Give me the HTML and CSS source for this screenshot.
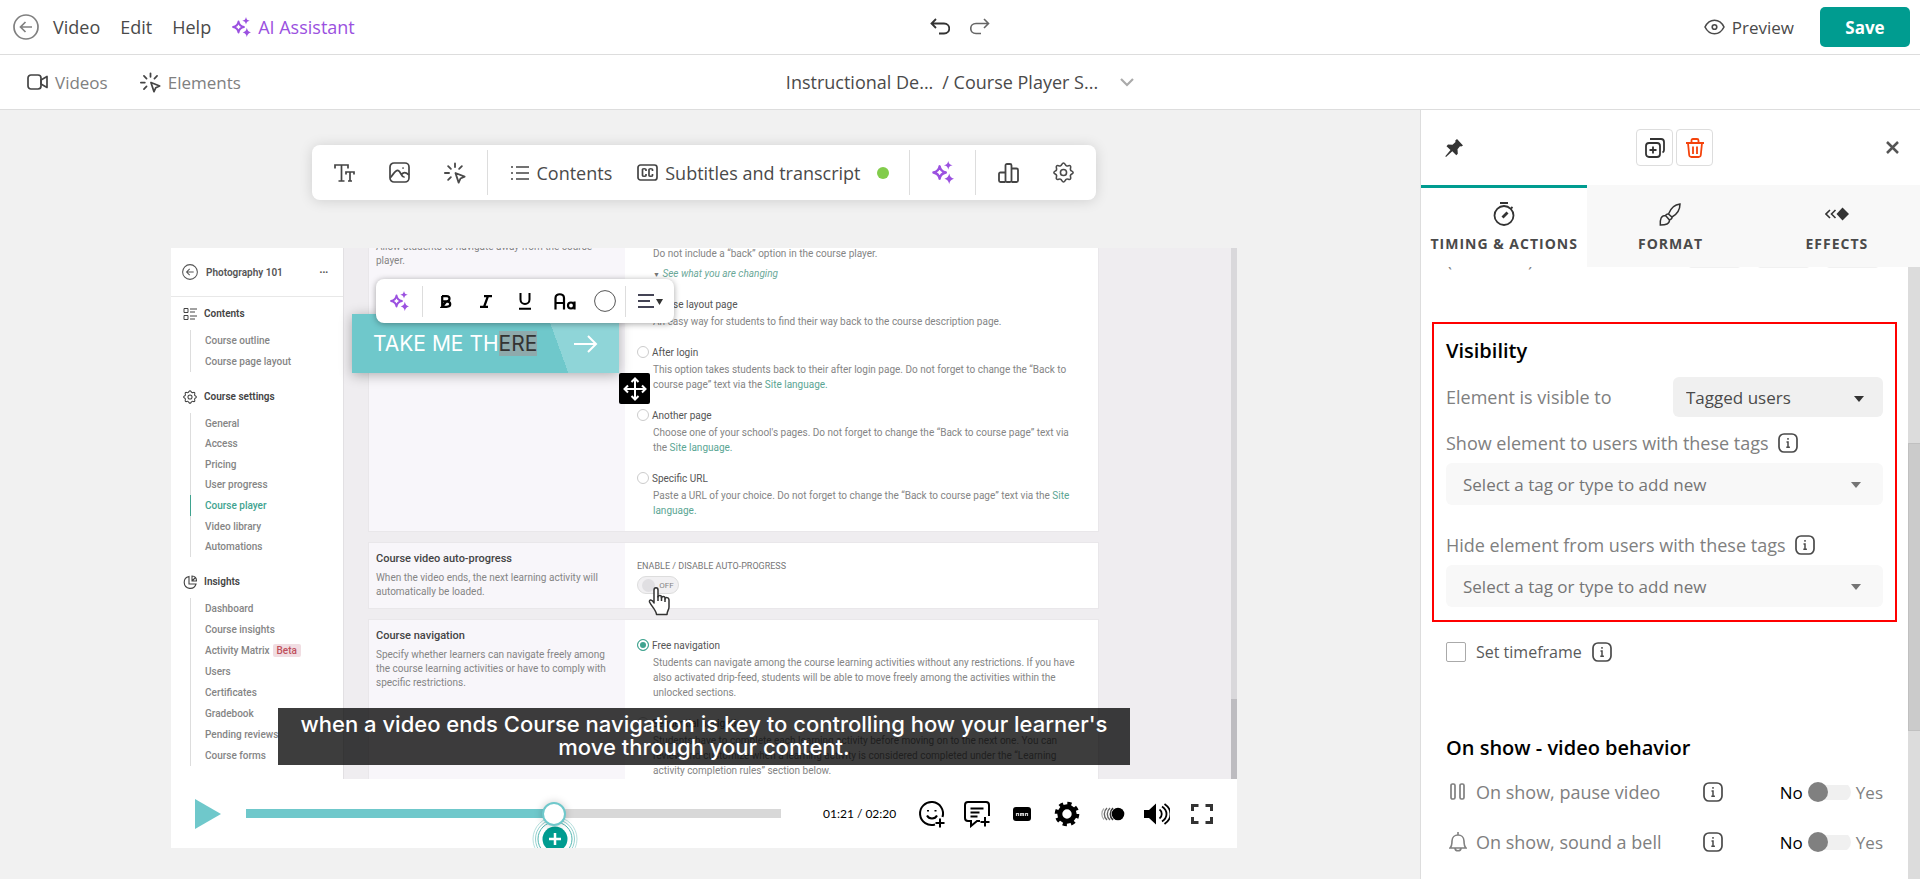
FILE: index.html
```html
<!DOCTYPE html>
<html lang="en">
  <head>
    <meta charset="UTF-8" />
    <meta name="viewport" content="width=device-width, initial-scale=1.0" />
    <title>Video Editor</title>
    <link rel="stylesheet" href="styles.css">
  </head>
  <body>
    <!-- shared icons -->
    <svg class="sprite" aria-hidden="true">
      <symbol id="i-sparkle" viewBox="0 0 24 24">
        <path fill="none" stroke="currentColor" stroke-width="2.400" stroke-linejoin="round" d="M9 5.500c.7 4 2.500 5.800 6.500 6.500-4 .7-5.800 2.500-6.500 6.500-.7-4-2.500-5.800-6.500-6.500 4-.7 5.800-2.500 6.500-6.500z" />
        <path fill="currentColor" d="M18 0c.6 3 1.700 4 4.500 4.500-2.800.5-3.900 1.500-4.500 4.500-.6-3-1.700-4-4.500-4.500C16.300 4 17.400 3 18 0zM19 13c.7 3.400 2 4.800 5 5.500-3 .7-4.300 2.100-5 5.500-.7-3.400-2-4.800-5-5.500 3-.7 4.300-2.100 5-5.500z" />
      </symbol>
      <symbol id="i-click" viewBox="0 0 24 24">
        <g fill="none" stroke="currentColor" stroke-width="2" stroke-linecap="round" stroke-linejoin="round">
          <path d="M12.500 12l10 4-4.500 2-2 4.500z" />
          <path d="M12 1.500v4M4.500 4.500l3 3M1 12h4.500M4.500 19.500l3-3M19.500 4.500l-3 3" />
        </g>
      </symbol>
      <symbol id="i-info" viewBox="0 0 20 20">
        <rect x="1" y="1" width="18" height="18" rx="5" fill="none" stroke="currentColor" stroke-width="1.700" />
        <path d="M10 5v1.800M8.500 9H10v5M8.300 14.300h3.600" fill="none" stroke="currentColor" stroke-width="1.500" />
      </symbol>
      <symbol id="i-gear" viewBox="0 0 24 24">
        <g fill="none" stroke="currentColor" stroke-width="1.800" stroke-linejoin="round">
          <path d="M12 1.200c1.800 0 1.800 2.600 3.400 3.200 1.600.7 3.300-1.200 4.500.1s-.6 3 .1 4.500c.6 1.600 3 1.300 3 3s-2.400 1.500-3 3c-.7 1.600 1.100 3.200-.1 4.500s-3-.6-4.500.1c-1.600.6-1.600 3.200-3.400 3.200s-1.800-2.600-3.400-3.200c-1.500-.7-3.300 1.200-4.500-.1s.6-3-.1-4.500c-.6-1.500-3-1.300-3-3s2.400-1.400 3-3c.7-1.500-1.100-3.200.1-4.500s3 .6 4.500-.1c1.600-.6 1.600-3.200 3.400-3.200z" />
          <circle cx="12" cy="12" r="3.500" />
        </g>
      </symbol>
      <symbol id="i-back" viewBox="0 0 26 26">
        <g fill="none" stroke="currentColor" stroke-width="1.700">
          <circle cx="13" cy="13" r="12" />
          <path d="M19 13H8M12.500 8L7.500 13l5 5" />
        </g>
      </symbol>
    </svg>

    <header class="topbar">
      <nav class="menu">
        <a href="#" class="back" aria-label="Back"><svg width="26" height="26"><use href="#i-back" /></svg></a>
        <a href="#">Video</a>
        <a href="#">Edit</a>
        <a href="#">Help</a>
        <a href="#" class="ai"><svg width="20" height="20"><use href="#i-sparkle" /></svg>AI Assistant</a>
      </nav>
      <div class="history">
        <button aria-label="Undo">
          <svg width="20" height="18" viewBox="0 0 20 18" fill="none" stroke="#333" stroke-width="1.800"><path d="M6 1L1.500 5.500 6 10M1.500 5.500H14c7 0 7 10 0 10H9" /></svg>
        </button>
        <button aria-label="Redo">
          <svg width="20" height="18" viewBox="0 0 20 18" fill="none" stroke="#666" stroke-width="1.600"><path d="M14 1l4.500 4.500L14 10M18.500 5.500H6c-7 0-7 10 0 10h5" /></svg>
        </button>
      </div>
      <div class="actions">
        <a href="#" class="preview">
          <svg width="21" height="16" viewBox="0 0 21 16" fill="none" stroke="currentColor" stroke-width="1.600"><path d="M1 8c4.500-9 14.500-9 19 0-4.500 9-14.500 9-19 0z" /><circle cx="10.500" cy="8" r="2.300" /></svg>Preview</a>
        <button class="save">Save</button>
      </div>
    </header>

    <div class="subbar">
      <nav class="sources">
        <a href="#"><svg width="21" height="16" viewBox="0 0 21 16" fill="none" stroke="#444" stroke-width="1.700" stroke-linejoin="round"><rect x="1" y="1" width="13" height="14" rx="3" /><path d="M14 6l6-3.500v11L14 10z" /></svg>Videos</a>
        <a href="#"><svg class="dark" width="21" height="21"><use href="#i-click" /></svg>Elements</a>
      </nav>
      <div class="crumbs">
        <span>Instructional De...</span><span>/ Course Player S...</span>
        <button aria-label="Choose activity"><svg width="14" height="9" viewBox="0 0 14 9" fill="none" stroke="#aaa" stroke-width="2.200"><path d="M1 1l6 6 6-6" /></svg></button>
      </div>
    </div>

    <div class="workspace">
      <main class="stage">
        <div class="toolbar">
          <div class="group">
            <button aria-label="Text"><svg width="21" height="18" viewBox="0 0 21 18" fill="none" stroke="#444" stroke-width="1.700"><path d="M1 4.500V1h13v3.500M7.500 1v16M4.500 17h6M12 10.500V8h8v2.500M16 8v9M14 17h4" /></svg></button>
            <button aria-label="Image"><svg width="21" height="21" viewBox="0 0 21 21" fill="none" stroke="#444" stroke-width="1.700" stroke-linecap="round"><rect x="1" y="1" width="19" height="19" rx="4" /><path d="M2 15c5-7 7-9 10-3 1 2 2 3 3 3M12.500 12.500c2-2.500 4-2.500 7 0M14 6h.1" /></svg></button>
            <button aria-label="Interactions"><svg width="22" height="22"><use href="#i-click" /></svg></button>
          </div>
          <div class="group wide">
            <button class="labeled"><svg width="18" height="16" viewBox="0 0 18 16" stroke="#444" stroke-width="1.600"><path d="M0 2h2M5 2h13M0 8h2M5 8h13M0 14h2M5 14h13" /></svg>Contents</button>
            <button class="labeled"><svg width="21" height="17" viewBox="0 0 21 17" fill="none" stroke="#444" stroke-width="1.700"><rect x="1" y="1" width="19" height="15" rx="2.500" /><path d="M9 7V5.500c0-1-3.500-1-3.500 0v6c0 1 3.500 1 3.500 0V10M15.500 7V5.500c0-1-3.500-1-3.500 0v6c0 1 3.500 1 3.500 0V10" /></svg>Subtitles and transcript</button>
            <span class="dot"></span>
          </div>
          <div class="group">
            <button class="purple" aria-label="AI"><svg width="23" height="23"><use href="#i-sparkle" /></svg></button>
          </div>
          <div class="group">
            <button aria-label="Statistics"><svg width="21" height="20" viewBox="0 0 21 20" fill="none" stroke="#444" stroke-width="1.800"><rect x="7.500" y="1" width="6" height="18" rx="1.500" /><path d="M7.500 9.500h-5C1.500 9.500 1 10 1 11v6.500c0 1 .5 1.500 1.500 1.500h5M13.500 5.500h5c1 0 1.500.5 1.500 1.500v10.500c0 1-.5 1.500-1.500 1.500h-5" /></svg></button>
            <button aria-label="Settings"><svg width="21" height="21"><use href="#i-gear" /></svg></button>
          </div>
        </div>

        <div class="player">
          <div class="frame">
            <div class="course-nav">
              <div class="course-head"><svg width="16" height="16"><use href="#i-back" /></svg><b>Photography 101</b><span>•••</span></div>
              <h4><svg width="14" height="14" viewBox="0 0 14 14" fill="none" stroke="currentColor"><path d="M1 1.500h4v4H1zM1 8.500h4v4H1zM7 2h7M7 5h5M7 9h7M7 12h5" /></svg>Contents</h4>
              <ul class="two">
                <li>Course outline</li>
                <li>Course page layout</li>
              </ul>
              <h4><svg width="14" height="14"><use href="#i-gear" /></svg>Course settings</h4>
              <ul class="seven">
                <li>General</li>
                <li>Access</li>
                <li>Pricing</li>
                <li>User progress</li>
                <li class="current">Course player</li>
                <li>Video library</li>
                <li>Automations</li>
              </ul>
              <h4><svg width="14" height="14" viewBox="0 0 14 14" fill="none" stroke="currentColor" stroke-width="1.100"><path d="M6 1.500a6 6 0 1 0 7 7.500H6z" /><path d="M9 1v5h4.500C13.500 3 12 1 9 1zM9 6l3-3" /></svg>Insights</h4>
              <ul class="eight">
                <li>Dashboard</li>
                <li>Course insights</li>
                <li>Activity Matrix <span class="beta">Beta</span></li>
                <li>Users</li>
                <li>Certificates</li>
                <li>Gradebook</li>
                <li>Pending reviews</li>
                <li>Course forms</li>
              </ul>
            </div>

            <div class="course-main">
              <section class="card first">
                <div class="about"><p>Allow students to navigate away from the course player.</p></div>
                <div class="options">
                  <p>Do not include a “back” option in the course player.</p>
                  <p class="hint"><span>▼</span> See what you are changing</p>
                  <label><input type="radio" name="back">Course layout page</label>
                  <p>An easy way for students to find their way back to the course description page.</p>
                  <label><input type="radio" name="back">After login</label>
                  <p>This option takes students back to their after login page. Do not forget to change the “Back to course page” text via the <a href="#">Site language.</a></p>
                  <label><input type="radio" name="back">Another page</label>
                  <p>Choose one of your school's pages. Do not forget to change the “Back to course page” text via the <a href="#">Site language.</a></p>
                  <label><input type="radio" name="back">Specific URL</label>
                  <p>Paste a URL of your choice. Do not forget to change the “Back to course page” text via the <a href="#">Site language.</a></p>
                </div>
              </section>
              <section class="card">
                <div class="about"><h5>Course video auto-progress</h5><p>When the video ends, the next learning activity will automatically be loaded.</p></div>
                <div class="options auto">
                  <h6>ENABLE / DISABLE AUTO-PROGRESS</h6>
                  <button class="off">OFF</button>
                </div>
              </section>
              <section class="card">
                <div class="about"><h5>Course navigation</h5><p>Specify whether learners can navigate freely among the course learning activities or have to comply with specific restrictions.</p></div>
                <div class="options">
                  <label><input type="radio" name="nav" checked>Free navigation</label>
                  <p>Students can navigate among the course learning activities without any restrictions. If you have also activated drip-feed, students will be able to move freely among the activities within the unlocked sections.</p>
                  <label><input type="radio" name="nav">Sequential navigation</label>
                  <p>Students have to complete each learning activity before moving on to the next one. You can review and customize when a learning activity is considered completed under the “Learning activity completion rules” section below.</p>
                </div>
              </section>
            </div>
            <div class="frame-scroll"><div></div></div>

            <!-- things lying over the video -->
            <svg class="hand" width="22" height="29" viewBox="0 0 22 29" fill="#fff" stroke="#333" stroke-width="1.500" stroke-linejoin="round"><path d="M6 16V3c0-3 4-3 4 0v7c0-2 3.500-2 3.500 0v1c0-2 3.500-2 3.500 0v1c0-2 4-2 4 1v7c0 3-2 4-2 7.500H8.500C8 23 4 20 1.500 15 1 12.500 4 12 6 16z" /><path d="M10 9v5M13.500 10v4M17 11.500V15" /></svg>

            <div class="cta">
              <span>TAKE ME TH<mark>ERE</mark></span>
              <svg width="24" height="18" viewBox="0 0 24 18" fill="none" stroke="#fff" stroke-width="2"><path d="M0 9h22M14 1l8 8-8 8" /></svg>
            </div>
            <div class="move">
              <svg width="24" height="24" viewBox="0 0 24 24" fill="none" stroke="#fff" stroke-width="2"><path d="M12 2v20M2 12h20M8.500 5L12 1.500 15.500 5M8.500 19l3.500 3.500 3.500-3.500M5 8.500L1.500 12 5 15.500M19 8.500l3.500 3.500-3.500 3.500" /></svg>
            </div>
            <div class="text-tools">
              <button class="purple ai-tool" aria-label="AI"><svg width="20" height="20"><use href="#i-sparkle" /></svg></button>
              <button aria-label="Bold"><svg width="12" height="13" viewBox="0 0 12 13" fill="none" stroke="#000" stroke-width="2.200"><path d="M2 1.200h4.500c4 0 4 5.100 0 5.100H2M6.500 6.300c5 0 5 5.500 0 5.500H2zM2.200 1v11" /></svg></button>
              <button aria-label="Italic"><svg width="14" height="13" viewBox="0 0 14 13" fill="none" stroke="#000" stroke-width="2.200"><path d="M5 1.100h8M1 11.900h8M9 1L5 12" /></svg></button>
              <button aria-label="Underline"><svg width="14" height="17" viewBox="0 0 14 17" fill="none" stroke="#000" stroke-width="2"><path d="M2.500 0v6.500c0 6 9 6 9 0V0M1 15.800h12" /></svg></button>
              <button aria-label="Font"><svg width="22" height="17" viewBox="0 0 22 17" fill="none" stroke="#000" stroke-width="2.200"><path d="M1.500 16.500V5c0-5 8.500-5 8.500 0v11.500M1.500 10H10" /><circle cx="17" cy="12.500" r="3" /><path d="M20.500 8.500v8" /></svg></button>
              <button aria-label="Color"><svg width="22" height="22" viewBox="0 0 22 22" fill="none" stroke="#555"><circle cx="11" cy="11" r="10.400" /></svg></button>
              <button class="align" aria-label="Align"><svg width="25" height="14" viewBox="0 0 25 14"><path d="M0 1h16M0 7h12M0 13h16" stroke="#445" stroke-width="1.800" /><path d="M18 5h7l-3.500 6z" fill="#333" /></svg></button>
            </div>
            <p class="caption">when a video ends Course navigation is key to controlling how your learner's move through your content.</p>
          </div>

          <div class="controls">
            <button aria-label="Play"><svg width="26" height="30" viewBox="0 0 26 30"><path d="M0 0l26 15L0 30z" fill="#6fc8cb" /></svg></button>
            <div class="seek">
              <input type="range" min="0" max="140" value="81" aria-label="Seek">
              <svg class="marker" width="46" height="46" viewBox="0 0 46 46" fill="none"><circle cx="23" cy="23" r="22" stroke="#b5dfdd" /><circle cx="23" cy="23" r="19.500" stroke="#93d0cd" /><circle cx="23" cy="23" r="17" fill="#fff" stroke="#4fb5b0" /><circle cx="23" cy="23" r="12.500" fill="#009c90" /><path d="M17 23h12M23 17v12" stroke="#fff" stroke-width="2.500" /></svg>
            </div>
            <span class="time">01:21 / 02:20</span>
            <div class="player-buttons">
              <button aria-label="Reactions"><svg width="28" height="28" viewBox="0 0 28 28" fill="none" stroke="#000" stroke-width="2"><path d="M24.500 17A11.500 11.500 0 1 0 17 24.500" /><path d="M9 15.500c2 4 8 4 10 0M10 10v1.500M17.500 10v1.500M22 18.500v9M17.500 23h9" /></svg></button>
              <button aria-label="Comment"><svg width="28" height="28" viewBox="0 0 28 28" fill="none" stroke="#000" stroke-width="2"><path d="M26 16V5c0-2-1-3-3-3H5C3 2 2 3 2 5v13c0 2 1 3 3 3h3v5l6-5h3M22 17v9.500M17.500 22h9M7.500 8.500h13M7.500 12.500h9M7.500 16.500h7" /></svg></button>
              <button aria-label="Subtitles"><svg width="18" height="14" viewBox="0 0 18 14"><rect width="18" height="14" rx="3" /><path d="M3.500 9V6.500h2V9M7.500 9V6.500h3V9M9 6.500V9M12.500 9V6.500h2V9" fill="none" stroke="#ccc" stroke-width="1.200" /></svg></button>
              <button aria-label="Settings"><svg width="26" height="26" viewBox="0 0 26 26"><circle cx="13" cy="13" r="7.200" fill="none" stroke="#000" stroke-width="5" /><circle cx="13" cy="13" r="10.300" fill="none" stroke="#000" stroke-width="4" stroke-dasharray="4.090 4" /></svg></button>
              <button aria-label="Speed"><svg width="26" height="14" viewBox="0 0 26 14"><circle cx="19" cy="7" r="6.300" /><path d="M14 1a8 8 0 0 0 0 12" fill="none" stroke="#333" stroke-width="1.600" /><path d="M11 1a8 8 0 0 0 0 12M8 1a8 8 0 0 0 0 12" fill="none" stroke="#666" stroke-width="1.400" /><path d="M5 1.500a8 8 0 0 0 0 11" fill="none" stroke="#aaa" stroke-width="1.200" /></svg></button>
              <button aria-label="Volume"><svg width="26" height="22" viewBox="0 0 26 22"><path d="M0 7h5l7-6.500v21L5 15H0z" /><path d="M15.500 6.500c3 2 3 7 0 9M18 3.500c6 4 6 11 0 15M20.500 1c8 5.500 8 14.500 0 20" fill="none" stroke="#000" stroke-width="1.800" /></svg></button>
              <button aria-label="Fullscreen"><svg width="22" height="20" viewBox="0 0 22 20" fill="none" stroke="#333" stroke-width="3"><path d="M1.500 7V1.500h6M14.500 1.500h6V7M20.500 13v5.500h-6M7.500 18.500h-6V13" /></svg></button>
            </div>
          </div>
        </div>
      </main>

      <aside class="panel">
        <div class="panel-head">
          <button aria-label="Pin"><svg width="18" height="18" viewBox="0 0 18 18" fill="#333"><path d="M12 0l6 6.500-1.800 1-1.200-.3-2.500 3 .3 4.500-1.500 1.500-4-4L1 18l-.7-.7L5.500 11 1.500 7.200 3 5.500l4.500.3L10.500 3l-.2-1.500z" /></svg></button>
          <div class="pair">
            <button class="boxed" aria-label="Duplicate"><svg width="20" height="20" viewBox="0 0 20 20" fill="none" stroke="#333" stroke-width="1.800"><rect x="1" y="5" width="14" height="14" rx="3" /><path d="M5 1h11c2 0 3 1 3 3v8c0 1.500-.5 2-1.500 2.500M8 8.500v7M4.500 12h7" /></svg></button>
            <button class="boxed" aria-label="Delete"><svg width="18" height="20" viewBox="0 0 18 20" fill="none" stroke="#f4430c" stroke-width="1.800"><path d="M0 5h18M2 5l1.200 12c.2 1.500 1 2 2.200 2h7.200c1.200 0 2-.5 2.200-2L16 5M5.500 5V2.500c0-1 .5-1.500 1.500-1.500h4c1 0 1.500.5 1.500 1.500V5M7 8.500V16M11 8.500V16" /></svg></button>
          </div>
          <button aria-label="Close"><svg width="13" height="13" viewBox="0 0 13 13" stroke="#555" stroke-width="2.500"><path d="M1 1l11 11M12 1L1 12" /></svg></button>
        </div>
        <div class="tabs">
          <button class="active"><svg width="22" height="24" viewBox="0 0 22 24" fill="none" stroke="#333" stroke-width="1.800"><circle cx="11" cy="13.500" r="9.500" /><path d="M7 1h8M18 6.500l1.500-1.500" /><path d="M9.500 15.500l5-5" stroke-width="2.800" /></svg>TIMING &amp; ACTIONS</button>
          <button><svg width="22" height="24" viewBox="0 0 22 24" fill="none" stroke="#333" stroke-width="1.500"><path d="M21 2c-5 .5-9 3.500-11.500 10l3.500 3C18.500 12 21 8 21 2zM9.500 12c-1.500-.5-2 0-3 1.500l4 4.500c1.500-.8 3-1.500 2.500-3M6.500 13.500C2 13.500 1 17 1.300 23 7 23 10.500 22 10.500 18" /></svg>FORMAT</button>
          <button><svg width="24" height="24" viewBox="0 0 24 24" fill="none" stroke="#333" stroke-width="1.600"><path d="M5 8l-4 4 4 4M10.500 8l-4 4 4 4" /><path d="M17.500 5.500l6.500 6.500-6.500 6.500L11.500 12z" fill="#333" stroke="none" /></svg>EFFECTS</button>
        </div>

        <div class="panel-scroll">
          <form class="panel-body">
            <div class="time-row">
              <span>(mm:ss.00)</span>
              <input type="text" aria-label="Minutes"><input type="text" aria-label="Seconds"><input type="text" aria-label="Hundredths">
            </div>

            <section class="visibility">
              <h3>Visibility</h3>
              <div class="row">
                <label for="visible">Element is visible to</label>
                <div class="select dark-select"><select id="visible"><option>Tagged users</option></select></div>
              </div>
              <div class="field">
                <label for="showTags">Show element to users with these tags <svg width="20" height="20"><use href="#i-info" /></svg></label>
                <div class="select"><select id="showTags"><option>Select a tag or type to add new</option></select></div>
              </div>
              <div class="field">
                <label for="hideTags">Hide element from users with these tags <svg width="20" height="20"><use href="#i-info" /></svg></label>
                <div class="select"><select id="hideTags"><option>Select a tag or type to add new</option></select></div>
              </div>
            </section>

            <div class="timeframe">
              <input type="checkbox" id="timeframe"><label for="timeframe">Set timeframe</label><svg width="20" height="20"><use href="#i-info" /></svg>
            </div>

            <section class="behavior">
              <h3>On show - video behavior</h3>
              <div class="toggle-row">
                <svg class="lead" width="18" height="20" viewBox="0 0 18 20" fill="none" stroke="#808080" stroke-width="1.700"><rect x="2" y="2" width="4" height="15" rx="1.500" /><rect x="11" y="2" width="4" height="15" rx="1.500" /></svg>
                <label for="pause">On show, pause video</label>
                <svg width="20" height="20"><use href="#i-info" /></svg>
                <div class="switch"><b>No</b><input type="checkbox" id="pause"><span>Yes</span></div>
              </div>
              <div class="toggle-row">
                <svg class="lead" width="18" height="20" viewBox="0 0 18 20" fill="none" stroke="#808080" stroke-width="1.600"><path d="M1 16c2-2 2-4 2-7 0-8 12-8 12 0 0 3 0 5 2 7zM6 16.500c.5 3 5.500 3 6 0M9 0v2.500" /></svg>
                <label for="bell">On show, sound a bell</label>
                <svg width="20" height="20"><use href="#i-info" /></svg>
                <div class="switch"><b>No</b><input type="checkbox" id="bell"><span>Yes</span></div>
              </div>
            </section>
          </form>
          <div class="scrollbar"><div></div></div>
        </div>
      </aside>
    </div>
  </body>
</html>
```
FILE: styles.css
```css
* {
  box-sizing: border-box;
}
body {
  margin: 0;
  height: 100vh;
  overflow: hidden;
  display: flex;
  flex-direction: column;
  font-family: "Open Sans", "Noto Sans", sans-serif;
  font-size: 18px;
  color: #4a4a4a;
  background-color: #fff;
}
.sprite {
  display: none;
}
svg {
  flex: none;
}
h3,
h4,
h5,
h6,
p,
ul {
  margin: 0;
  padding: 0;
}
a {
  color: inherit;
  text-decoration: none;
}
button {
  background: none;
  border: none;
  padding: 0;
  margin: 0;
  font: inherit;
  color: inherit;
  cursor: pointer;
  display: flex;
  align-items: center;
  justify-content: center;
}

/* Top bars */
.topbar,
.subbar {
  flex: none;
  height: 55px;
  border-bottom: 1px solid #ddd;
  display: grid;
  grid-template-columns: 1fr auto 1fr;
  align-items: center;
}
.menu,
.actions,
.sources,
.crumbs,
.history,
.menu a,
.actions a,
.sources a {
  display: flex;
  align-items: center;
}
.menu {
  padding-left: 13px;
  gap: 20px;
}
.back {
  color: #808080;
  margin-right: -6px;
}
.ai,
.purple {
  color: #9b51e0;
}
.ai,
.sources a,
.preview {
  gap: 7px;
}
.history {
  gap: 20px;
}
.actions {
  justify-content: flex-end;
  gap: 26px;
  padding-right: 10px;
  font-weight: 500;
}
.save {
  width: 90px;
  height: 40px;
  border-radius: 5px;
  background-color: #009c90;
  color: #fff;
  font-size: 17px;
  font-weight: 700;
}
.preview {
  font-size: 17px;
}
.sources {
  padding-left: 27px;
  gap: 32px;
  color: #808080;
  font-size: 17px;
  font-weight: 500;
}
.dark {
  color: #444;
}
.crumbs {
  gap: 9px;
}
.crumbs button {
  margin-left: 13px;
}

/* Stage */
.workspace {
  flex: 1;
  min-height: 0;
  display: grid;
  grid-template-columns: 1fr 500px;
}
.stage {
  background-color: #f1f1f1;
  padding: 35px 183px 0 171px;
  display: flex;
  flex-direction: column;
  align-items: center;
}
.toolbar {
  height: 55px;
  background-color: #fff;
  border-radius: 8px;
  box-shadow: 0 1px 14px rgba(0, 0, 0, 0.14);
  display: flex;
  align-items: center;
}
.group {
  height: 45px;
  padding: 0 5px;
  display: flex;
  align-items: center;
  border-right: 1px solid #ddd;
}
.group:last-child {
  border-right: none;
}
.group button {
  width: 55px;
}
.group.wide {
  padding: 0 20px 0 23px;
}
.group .labeled {
  width: auto;
  gap: 7px;
  margin-right: 25px;
}
.wide .labeled:nth-child(2) {
  margin-right: 16px;
}
.dot {
  width: 12px;
  height: 12px;
  border-radius: 50%;
  background-color: #82cc4b;
}

/* Player */
.player {
  width: 100%;
  margin-top: 48px;
  background-color: #fff;
  overflow: hidden;
}
.frame {
  position: relative;
  height: 531px;
  overflow: hidden;
  display: flex;
  font-family: Roboto, "Open Sans", sans-serif;
  font-size: 10px;
  color: #858585;
  background-color: #efedf0;
}
.course-nav {
  width: 173px;
  flex: none;
  background-color: #fff;
  border-right: 1px solid #e2e0e3;
  font-weight: 500;
}
.course-head {
  height: 49px;
  padding: 0 15px 0 11px;
  border-bottom: 1px solid #e8e8e8;
  display: flex;
  align-items: center;
  gap: 8px;
  color: #555;
}
.course-head b {
  flex: 1;
  font-weight: 600;
}
.course-head span {
  font-size: 8px;
}
.course-nav h4 {
  height: 33px;
  padding-left: 12px;
  display: flex;
  align-items: center;
  gap: 7px;
  font-size: 10px;
  font-weight: 600;
  color: #444;
}
.course-nav ul {
  list-style: none;
  margin: 0 0 8px 19px;
  border-left: 1px solid #ddd;
  display: grid;
  grid-auto-rows: 1fr;
}
.course-nav li {
  padding-left: 14px;
  display: flex;
  align-items: center;
  gap: 3px;
}
.two {
  height: 42px;
}
.seven {
  height: 144px;
}
.eight {
  height: 168px;
}
.course-nav .current {
  color: #3fa38f;
  border-left: 1px solid #3fa38f;
  margin-left: -1px;
}
.beta {
  background-color: #f1dde2;
  color: #c0505c;
  border-radius: 2px;
  padding: 1px 4px;
}
.course-main {
  flex: 1;
  padding: 0 132px 0 24px;
}
.card {
  display: grid;
  grid-template-columns: 256px 1fr;
  background-color: #fff;
  border: 1px solid #e9e7ea;
  margin-bottom: 10px;
}
.card.first {
  margin-top: -20px;
}
.about {
  background-color: #f8f6fa;
  padding: 9px 7px;
  line-height: 14px;
}
.first .about {
  padding-top: 11px;
}
.about h5 {
  font-size: 11px;
  font-weight: 500;
  color: #444;
  margin-bottom: 5px;
}
.about p {
  padding-right: 4px;
}
.options {
  padding: 15px 16px 0 12px;
  line-height: 15px;
}
.first .options {
  padding-top: 17px;
}
.options label {
  height: 20px;
  display: flex;
  align-items: center;
  gap: 3px;
  color: #555;
}
.options p {
  padding-left: 16px;
  margin-bottom: 13px;
}
.options p:first-child {
  margin-bottom: 5px;
}
.options .hint {
  color: #6aa898;
  font-style: italic;
  margin-bottom: 11px;
}
.hint span {
  font-size: 7px;
  font-style: normal;
  color: #777;
}
.options a {
  color: #5aa593;
}
.options input {
  appearance: none;
  width: 12px;
  height: 12px;
  margin: 0;
  border: 1px solid #ccc;
  border-radius: 50%;
  background-color: #fff;
}
.options input:checked {
  border-color: #3fa38f;
  background-color: #3fa38f;
  box-shadow: inset 0 0 0 2px #fff;
}
.options.auto {
  padding-bottom: 12px;
}
.auto h6 {
  font-size: 9px;
  line-height: 16px;
  font-weight: 400;
  color: #777;
  margin-bottom: 2px;
}
.off {
  width: 42px;
  height: 18px;
  border: 1px solid #ddd;
  border-radius: 9px;
  background-color: #f1f0f2;
  font-size: 8px;
  gap: 4px;
}
.off::before {
  content: "";
  width: 13px;
  height: 13px;
  border-radius: 50%;
  background-color: #e0dfe2;
}
.frame-scroll {
  width: 6px;
  flex: none;
  background-color: #d9d8db;
  display: flex;
  align-items: flex-end;
}
.frame-scroll div {
  width: 100%;
  height: 15%;
  background-color: #bdbcc0;
}

/* Overlays, placed on the video canvas */
.hand {
  position: absolute;
  left: 477px;
  top: 339px;
}
.cta {
  position: absolute;
  left: 181px;
  top: 66px;
  width: 267px;
  height: 59px;
  padding: 0 21px;
  display: flex;
  align-items: center;
  justify-content: space-between;
  background: linear-gradient(70deg, #6fc8cb 75%, #8fd5d8 75%);
  box-shadow: 0 2px 12px rgba(0, 0, 0, 0.3);
  color: #fff;
  font-family: Inter, sans-serif;
  font-size: 21px;
}
.cta mark {
  background-color: #8eaaac;
  color: #333;
}
.move {
  position: absolute;
  left: 448px;
  top: 125px;
  width: 31px;
  height: 31px;
  border-radius: 2px;
  background-color: #000;
  display: flex;
  align-items: center;
  justify-content: center;
}
.text-tools {
  position: absolute;
  left: 205px;
  top: 31px;
  width: 298px;
  height: 44px;
  border-radius: 8px;
  background-color: #fff;
  box-shadow: 0 1px 6px rgba(0, 0, 0, 0.35);
  display: flex;
  align-items: center;
}
.text-tools button {
  width: 40px;
  height: 31px;
}
.text-tools .ai-tool {
  width: 47px;
  border-right: 1px solid #ddd;
  margin-right: 3px;
}
.text-tools .align {
  width: 49px;
  border-left: 1px solid #ddd;
}
.caption {
  position: absolute;
  left: 107px;
  right: 107px;
  bottom: 14px;
  height: 57px;
  padding: 5px 12px;
  background-color: rgba(0, 0, 0, 0.76);
  color: #fff;
  font-family: Inter, sans-serif;
  font-size: 22px;
  font-weight: 500;
  line-height: 23px;
  text-align: center;
}

/* Controls */
.controls {
  height: 69px;
  padding: 0 24px;
  display: flex;
  align-items: center;
}
.seek {
  position: relative;
  flex: 1;
  margin: 0 42px 0 25px;
  display: flex;
}
.seek input {
  appearance: none;
  position: relative;
  z-index: 1;
  width: 100%;
  height: 24px;
  margin: 0;
  background: linear-gradient(90deg, #6fc8cb 57%, #d8d8d8 57%) center / 100% 9px no-repeat;
}
.seek input::-webkit-slider-thumb {
  appearance: none;
  width: 24px;
  height: 24px;
  border-radius: 50%;
  background-color: #fff;
  border: 2px solid #6fc8cb;
  box-shadow: 0 0 8px rgba(0, 0, 0, 0.2);
}
.marker {
  position: absolute;
  left: 286px;
  top: 14px;
}
.time {
  font-family: Lato, sans-serif;
  font-size: 12px;
  color: #000;
  width: 73px;
  white-space: nowrap;
}
.player-buttons {
  display: flex;
  margin: 0 -11px 0 13px;
}
.player-buttons button {
  width: 45px;
}

/* Right panel */
.panel {
  border-left: 1px solid #ddd;
  display: flex;
  flex-direction: column;
  min-height: 0;
}
.panel-head {
  flex: none;
  height: 75px;
  padding: 0 21px 0 24px;
  display: flex;
  align-items: center;
  justify-content: space-between;
}
.pair {
  display: flex;
  gap: 3px;
}
.boxed {
  width: 37px;
  height: 37px;
  border: 1px solid #ddd;
  border-radius: 4px;
}
.tabs {
  flex: none;
  height: 82px;
  display: grid;
  grid-template-columns: repeat(3, 1fr);
}
.tabs button {
  flex-direction: column;
  gap: 8px;
  border-top: 3px solid #f8f8f8;
  background-color: #f8f8f8;
  font-size: 14px;
  font-weight: 700;
  letter-spacing: 1px;
}
.tabs .active {
  border-color: #009c90;
  background-color: #fff;
}
.panel-scroll {
  flex: 1;
  min-height: 0;
  display: flex;
}
.panel-body {
  flex: 1;
  overflow: hidden;
  padding: 0 11px;
  color: #808080;
}
.scrollbar {
  width: 12px;
  background-color: #dcdcdc;
  padding-top: 176px;
}
.scrollbar div {
  height: 288px;
  background-color: #cbcbcb;
  border: 1px solid #c0c0c0;
  border-right: none;
}
.time-row {
  display: flex;
  align-items: flex-end;
  height: 41px;
  margin-top: -27px;
  padding: 0 17px 0 15px;
  gap: 14px;
}
.time-row span {
  flex: 1;
  font-size: 17px;
  line-height: 41px;
}
.time-row input {
  width: 55px;
  height: 28px;
  border: none;
  border-radius: 5px;
  background-color: #f1f1f1;
  margin-bottom: 13px;
}
.visibility {
  margin-top: 41px;
  height: 300px;
  padding: 11px 12px 0;
  border: 2px solid #f00;
}
h3 {
  font-size: 20px;
  line-height: 32px;
  font-weight: 600;
  color: #000;
}
.row {
  height: 40px;
  margin: 10px 0 13px;
  display: flex;
  align-items: center;
  justify-content: space-between;
}
.field {
  margin-bottom: 27px;
}
.field label {
  height: 33px;
  padding-bottom: 7px;
  display: flex;
  align-items: center;
  gap: 9px;
}
.field svg,
.timeframe svg,
.toggle-row svg {
  color: #4a4a4a;
}
.select {
  position: relative;
  height: 42px;
  border-radius: 6px;
  background-color: #f8f8f8;
  color: #757575;
}
.select select {
  appearance: none;
  width: 100%;
  height: 100%;
  border: none;
  background: none;
  padding: 0 17px;
  font: inherit;
  font-size: 17px;
  color: inherit;
}
.select::after {
  content: "";
  position: absolute;
  right: 22px;
  top: 19px;
  border: 5px solid transparent;
  border-top: 6px solid #757575;
  border-bottom: none;
}
.dark-select {
  width: 210px;
  height: 40px;
  background-color: #f0f0f0;
  color: #4a4a4a;
}
.dark-select select {
  padding: 0 13px;
}
.dark-select::after {
  right: 19px;
  border-top-color: #333;
}
.timeframe {
  height: 40px;
  margin-top: 10px;
  padding-left: 14px;
  display: flex;
  align-items: center;
  color: #5a5a5a;
  font-size: 16px;
}
.timeframe input {
  appearance: none;
  width: 20px;
  height: 20px;
  margin: 0 10px 0 0;
  border: 1px solid #aaa;
  border-radius: 2px;
}
.timeframe svg {
  margin-left: 10px;
}
.behavior {
  margin-top: 60px;
  padding: 0 14px;
}
.behavior h3 {
  margin-bottom: 3px;
}
.toggle-row {
  height: 50px;
  display: grid;
  grid-template-columns: 30px 227px 1fr auto;
  align-items: center;
}
.lead {
  margin-left: 3px;
}
.switch {
  display: flex;
  align-items: center;
  gap: 5px;
  font-size: 17px;
}
.switch b {
  font-weight: 400;
  color: #000;
}
.switch input {
  appearance: none;
  width: 43px;
  height: 20px;
  margin: 0;
  display: flex;
  align-items: center;
  background: linear-gradient(#f0f0f0, #f0f0f0) right / 34px 15px no-repeat;
  border-radius: 10px;
}
.switch input::before {
  content: "";
  width: 20px;
  height: 20px;
  border-radius: 50%;
  background-color: #808080;
}
```
